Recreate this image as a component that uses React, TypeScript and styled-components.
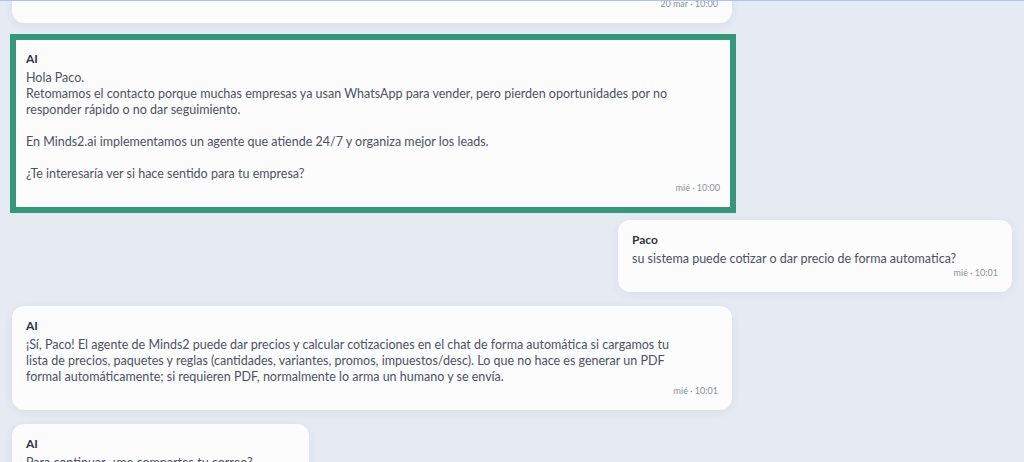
import React from 'react'
import styled, { createGlobalStyle } from 'styled-components'

type Message = {
  id: number
  author: string
  text: string
  time: string
  mine?: boolean
  width: number
  highlighted?: boolean
}

const messages: Message[] = [
  {
    id: 1,
    author: 'AI',
    text: 'Perfecto, quedo atento.',
    time: '20 mar · 10:00',
    width: 720,
  },
  {
    id: 2,
    author: 'AI',
    text:
      'Hola Paco.\nRetomamos el contacto porque muchas empresas ya usan WhatsApp para vender, pero pierden oportunidades por no\nresponder rápido o no dar seguimiento.\n\nEn Minds2.ai implementamos un agente que atiende 24/7 y organiza mejor los leads.\n\n¿Te interesaría ver si hace sentido para tu empresa?',
    time: 'mié · 10:00',
    width: 726,
    highlighted: true,
  },
  {
    id: 3,
    author: 'Paco',
    text: 'su sistema puede cotizar o dar precio de forma automatica?',
    time: 'mié · 10:01',
    mine: true,
    width: 394,
  },
  {
    id: 4,
    author: 'AI',
    text:
      '¡Sí, Paco! El agente de Minds2 puede dar precios y calcular cotizaciones en el chat de forma automática si cargamos tu\nlista de precios, paquetes y reglas (cantidades, variantes, promos, impuestos/desc). Lo que no hace es generar un PDF\nformal automáticamente; si requieren PDF, normalmente lo arma un humano y se envía.',
    time: 'mié · 10:01',
    width: 720,
  },
  {
    id: 5,
    author: 'AI',
    text: 'Para continuar, ¿me compartes tu correo?',
    time: 'mié · 10:02',
    width: 297,
  },
]

export const App: React.FC = () => {
  return (
    <>
      <GlobalStyle />
      <Screen>
        <List>
          {messages.map((m) =>
            m.highlighted ? (
              <Highlight key={m.id} $width={m.width}>
                <Author>{m.author}</Author>
                <Body>{m.text}</Body>
                <Time>{m.time}</Time>
              </Highlight>
            ) : (
              <Bubble key={m.id} $mine={m.mine} $width={m.width}>
                <Author>{m.author}</Author>
                <Body>{m.text}</Body>
                <Time>{m.time}</Time>
              </Bubble>
            )
          )}
        </List>
      </Screen>
    </>
  )
}
export default App

const GlobalStyle = createGlobalStyle`
  html, body {
    margin: 0;
    padding: 0;
    background: #e6eaf3;
    font-family: Lato, 'Noto Sans', sans-serif;
  }
`

const Screen = styled.div`
  height: 462px;
  overflow: hidden;
  border-top: 1px solid #a9c4f3;
  box-sizing: border-box;
  background: #e6eaf3;
`

const List = styled.div`
  display: flex;
  flex-direction: column;
  gap: 14px;
  padding: 0 12px;
  margin-top: -50px;
`

const Bubble = styled.div<{ $mine?: boolean; $width: number }>`
  align-self: ${(p) => (p.$mine ? 'flex-end' : 'flex-start')};
  width: ${(p) => p.$width}px;
  box-sizing: border-box;
  padding: 12px 14px 13px;
  background: #fcfcfd;
  border-radius: 12px;
  box-shadow: 0 2px 10px rgba(60, 72, 100, 0.07);
`

const Highlight = styled.div<{ $width: number }>`
  align-self: flex-start;
  width: ${(p) => p.$width}px;
  box-sizing: border-box;
  margin: -3px 0 -7px -2px;
  padding: 11px 10px 13px;
  background: #fcfcfd;
  border: 6px solid #36977a;
`

const Author = styled.div`
  font-size: 12px;
  line-height: 16px;
  font-weight: 700;
  color: #2f3645;
  margin-bottom: 3px;
`

const Body = styled.div`
  font-size: 12.5px;
  line-height: 16px;
  color: #4b5264;
  white-space: pre-line;
`

const Time = styled.div`
  font-size: 9px;
  line-height: 12px;
  color: #8b909b;
  text-align: right;
`
